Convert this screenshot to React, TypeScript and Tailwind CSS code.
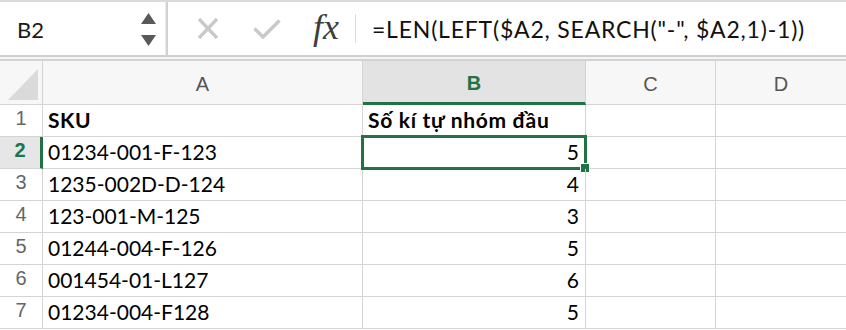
import React from "react";

const CELL_FONT = { fontFamily: "Lato, 'Open Sans', sans-serif" };
const HDR_FONT = { fontFamily: "'Liberation Sans', Arial, sans-serif" };

const rows: [string, string][] = [
  ["SKU", "Số kí tự nhóm đầu"],
  ["01234-001-F-123", "5"],
  ["1235-002D-D-124", "4"],
  ["123-001-M-125", "3"],
  ["01244-004-F-126", "5"],
  ["001454-01-L127", "6"],
  ["01234-004-F128", "5"],
];

export default function App() {
  return (
    <div className="w-[846px] h-[330px] overflow-hidden bg-white">
      {/* toolbar */}
      <div className="h-[61px] flex flex-col">
        <div className="h-[2px] bg-[#dadada]" />
        <div className="h-[53px] flex bg-white">
          <div className="w-[165px] flex items-center justify-between pl-[17px] pr-[9px]">
            <span className="text-[22px] text-[#1a1a1a] leading-none pt-[2px]" style={CELL_FONT}>
              B2
            </span>
            <div className="flex flex-col gap-[11px] pt-[1px]">
              <svg width="15" height="11" viewBox="0 0 15 11">
                <polygon points="7.5,0 15,11 0,11" fill="#595959" />
              </svg>
              <svg width="15" height="11" viewBox="0 0 15 11">
                <polygon points="0,0 15,0 7.5,11" fill="#595959" />
              </svg>
            </div>
          </div>
          <div className="w-[3px] flex">
            <div className="w-[1px] bg-[#ececec]" />
            <div className="w-[2px] bg-[#d2d2d2]" />
          </div>
          <div className="flex-1 flex items-center">
            <svg className="ml-[29px]" width="22" height="21" viewBox="0 0 22 21">
              <path d="M2 1 L20 20 M20 1 L2 20" stroke="#c9c9c9" strokeWidth="3.4" />
            </svg>
            <svg className="ml-[34px]" width="28" height="20" viewBox="0 0 28 20">
              <path d="M1.5 9.5 L10 18 L26.5 1.5" stroke="#c9c9c9" strokeWidth="3.4" fill="none" />
            </svg>
            <span
              className="ml-[32px] text-[36px] italic text-[#3d3d3d] leading-none -mt-[3px]"
              style={{ fontFamily: "'Liberation Serif', 'DejaVu Serif', serif" }}
            >
              fx
            </span>
            <div className="ml-[16px] w-[1px] h-[29px] bg-[#dcdcdc]" />
            <span
              className="ml-[16px] text-[23px] tracking-[0.8px] text-[#111] leading-none pt-[2px] whitespace-pre"
              style={CELL_FONT}
            >
              =LEN(LEFT($A2, SEARCH("-", $A2,1)-1))
            </span>
          </div>
        </div>
        <div className="h-[2px] bg-[#cfcfcf]" />
        <div className="h-[2px] bg-[#f4f4f4]" />
        <div className="h-[2px] bg-[#d2d2d2]" />
      </div>

      {/* grid */}
      <div className="grid grid-cols-[43px_320px_223px_130px_1fr] grid-rows-[44px_repeat(7,32px)]">
        {/* header row */}
        <div className="relative border-r border-b border-[#d4d4d4] bg-[#f7f7f7]">
          <svg className="absolute left-[8px] top-[8px]" width="30" height="31" viewBox="0 0 30 31">
            <polygon points="30,0 30,31 0,31" fill="#dadada" />
          </svg>
        </div>
        <div
          className="border-r border-b border-[#d4d4d4] bg-[#f7f7f7] flex items-center justify-center pt-[3px] text-[20px] text-[#555]"
          style={HDR_FONT}
        >
          A
        </div>
        <div
          className="border-r border-[#d4d4d4] bg-[#e3e3e3] flex items-center justify-center pt-[3px] text-[20px] font-bold text-[#217346] border-b-[3px] border-b-[#217346]"
          style={HDR_FONT}
        >
          B
        </div>
        <div
          className="border-r border-b border-[#d4d4d4] bg-[#f7f7f7] flex items-center justify-center pt-[3px] text-[20px] text-[#555]"
          style={HDR_FONT}
        >
          C
        </div>
        <div
          className="border-b border-[#d4d4d4] bg-[#f7f7f7] flex items-center justify-center pt-[3px] text-[20px] text-[#555]"
          style={HDR_FONT}
        >
          D
        </div>

        {rows.map(([a, b], i) => {
          const sel = i === 1;
          const header = i === 0;
          return (
            <React.Fragment key={i}>
              <div
                className={
                  "border-b border-[#d4d4d4] flex items-end justify-center pb-[3px] text-[20px] " +
                  (sel
                    ? "bg-[#e6e6e6] text-[#217346] font-bold border-r-[3px] border-r-[#217346]"
                    : "bg-white text-[#666] border-r")
                }
                style={HDR_FONT}
              >
                {i + 1}
              </div>
              <div
                className={
                  "border-r border-b border-[#d4d4d4] flex items-end pl-[5px] pb-[1px] text-[21px] text-black whitespace-nowrap " +
                  (header ? "font-bold tracking-[0.5px]" : "")
                }
                style={CELL_FONT}
              >
                {a}
              </div>
              <div
                className={
                  "relative border-r border-b border-[#d4d4d4] flex items-end pb-[1px] text-[21px] text-black whitespace-nowrap " +
                  (header ? "font-bold pl-[5px] tracking-[0.7px]" : "justify-end pr-[6px]")
                }
                style={CELL_FONT}
              >
                {b}
                {sel && (
                  <>
                    <div className="absolute -left-[2px] -top-[2px] -right-[2px] -bottom-[2px] border-[3px] border-[#217346]" />
                    <div className="absolute -right-[5px] -bottom-[5px] w-[10px] h-[10px] bg-[#217346] border border-white" />
                  </>
                )}
              </div>
              <div className="border-r border-b border-[#d4d4d4]" />
              <div className="border-b border-[#d4d4d4]" />
            </React.Fragment>
          );
        })}
      </div>
    </div>
  );
}
